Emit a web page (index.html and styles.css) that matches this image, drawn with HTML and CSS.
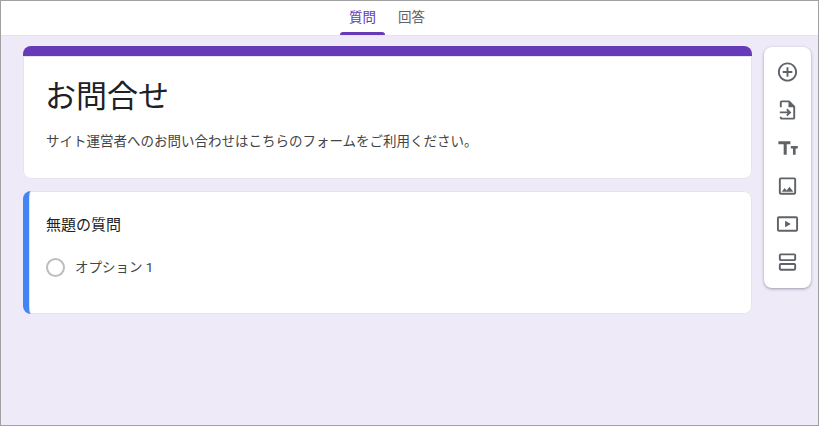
FILE: index.html
```html
<!DOCTYPE html>
<html lang="ja">
<head>
    <meta charset="UTF-8">
    <title>お問合せ</title>
    <link rel="stylesheet" href="styles.css">
</head>
<body>
    <div class="frame">
        <nav class="tabs">
            <a class="tab active">質問</a>
            <a class="tab">回答</a>
        </nav>
        <main class="content">
            <div class="cards">
                <section class="card title-card">
                    <h1>お問合せ</h1>
                    <p>サイト運営者へのお問い合わせはこちらのフォームをご利用ください。</p>
                </section>
                <section class="card question-card">
                    <h2>無題の質問</h2>
                    <div class="option">
                        <span class="radio"></span>
                        <span>オプション 1</span>
                    </div>
                </section>
            </div>
            <aside class="toolbar">
                <svg viewBox="0 0 24 24"><path d="M13 7h-2v4H7v2h4v4h2v-4h4v-2h-4V7zm-1-5C6.48 2 2 6.48 2 12s4.48 10 10 10 10-4.48 10-10S17.52 2 12 2zm0 18c-4.41 0-8-3.59-8-8s3.59-8 8-8 8 3.59 8 8-3.59 8-8 8z"/></svg>
                <svg viewBox="0 0 24 24"><path d="M14 2H6c-1.100 0-2 .9-2 2v5h2V4h7v5h5v11H6v-1H4v1c0 1.100.9 2 2 2h12c1.100 0 2-.9 2-2V8l-6-6z"/><path d="M12 10.500l-1.400 1.400 1.600 1.600H4v2h8.200l-1.600 1.600 1.400 1.400 4-4z"/></svg>
                <svg viewBox="0 0 24 24"><path d="M2.500 5v3.200H8V19h3.200V8.200H15V5zM15.500 10v2.600h2.200V19h2.800v-6.400h2.200V10z"/></svg>
                <svg viewBox="0 0 24 24"><path d="M19 5v14H5V5h14m0-2H5c-1.100 0-2 .9-2 2v14c0 1.100.9 2 2 2h14c1.100 0 2-.9 2-2V5c0-1.100-.9-2-2-2zm-4.900 9.700l-3 3.900L9 14l-3 4h12l-3.900-5.300z"/></svg>
                <svg viewBox="0 0 24 24"><path d="M21 4H3c-1.100 0-2 .9-2 2v12c0 1.100.9 2 2 2h18c1.100 0 2-.9 2-2V6c0-1.100-.9-2-2-2zm0 14H3V6h18v12zM9.500 8.500v7l6-3.500z"/></svg>
                <svg viewBox="0 0 24 24"><path d="M19 3H5c-1.100 0-2 .9-2 2v4c0 1.100.9 2 2 2h14c1.100 0 2-.9 2-2V5c0-1.100-.9-2-2-2zm0 6H5V5h14v4zm0 4H5c-1.100 0-2 .9-2 2v4c0 1.100.9 2 2 2h14c1.100 0 2-.9 2-2v-4c0-1.100-.9-2-2-2zm0 6H5v-4h14v4z"/></svg>
            </aside>
        </main>
    </div>
</body>
</html>
```

FILE: styles.css
```css
* {
    box-sizing: border-box;
}
body {
    margin: 0;
    font-family: Roboto, "Noto Sans CJK JP", sans-serif;
    color: #202124;
}
.frame {
    width: 819px;
    height: 426px;
    border: 1px solid #a0a0a0;
    background-color: #eeeaf8;
    overflow: hidden;
}
.tabs {
    height: 35px;
    background-color: white;
    border-bottom: 1px solid #e6e2f0;
    display: flex;
    gap: 4px;
    padding-left: 339px;
}
.tab {
    width: 45px;
    height: 34px;
    padding-top: 7px;
    display: flex;
    flex-direction: column;
    justify-content: space-between;
    text-align: center;
    font-size: 13.500px;
    line-height: 19px;
    color: #5f6368;
}
.tab.active {
    color: #673ab7;
}
.tab.active::after {
    content: "";
    height: 3px;
    background-color: #673ab7;
    border-radius: 3px 3px 0 0;
}
.content {
    display: flex;
    align-items: flex-start;
    gap: 12px;
    padding: 10px 0 0 22px;
}
.cards {
    width: 729px;
    display: flex;
    flex-direction: column;
    gap: 12px;
}
.card {
    background-color: white;
    border-radius: 8px;
    box-shadow: inset 0 0 0 1px #e6e2f0;
}
.title-card {
    height: 133px;
    border-top: 10px solid #673ab7;
    padding: 0 23px;
}
h1 {
    margin: 19px 0 0 -1px;
    font-size: 31px;
    font-weight: 400;
    line-height: 44px;
}
p {
    margin: 12px 0 0;
    font-size: 13.500px;
    line-height: 20px;
    color: #444;
}
.question-card {
    height: 123px;
    border-left: 6px solid #4285f4;
    padding: 24px 18px 0 17px;
}
h2 {
    margin: 0;
    font-size: 15px;
    font-weight: 400;
    line-height: 21px;
}
.option {
    display: flex;
    align-items: center;
    gap: 10px;
    margin-top: 21px;
    font-size: 13.500px;
    line-height: 20px;
    color: #444;
}
.radio {
    width: 19px;
    height: 19px;
    border: 2px solid #bdbdbd;
    border-radius: 50%;
}
.toolbar {
    width: 47px;
    height: 241px;
    margin-top: 1px;
    padding: 6px 1px 6px 0;
    background-color: white;
    border-radius: 8px;
    box-shadow: 0 1px 3px rgba(60, 50, 80, 0.45);
    display: flex;
    flex-direction: column;
    align-items: center;
}
.toolbar svg {
    width: 23px;
    height: 38px;
    flex-shrink: 0;
    fill: #5f6368;
}
```
